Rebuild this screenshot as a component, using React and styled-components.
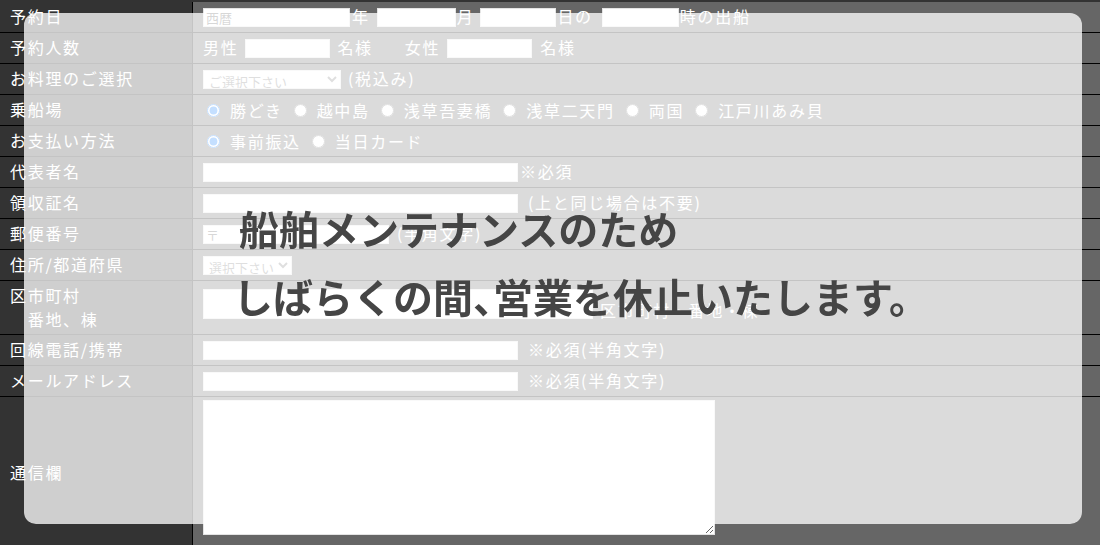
import React from "react";
import styled, { createGlobalStyle } from "styled-components";

const GlobalStyle = createGlobalStyle`
  html, body {
    margin: 0;
    padding: 0;
    background: #666;
    overflow: hidden;
  }
  body {
    font-family: "Noto Sans CJK JP", "Noto Sans", sans-serif;
    color: #fff;
  }
`;

// form table
const Form = styled.div`
  border-top: 2px solid #333;
`;

const Row = styled.div`
  display: grid;
  grid-template-columns: 193px 1fr;
  min-height: ${(p) => p.$h || 30}px;
  border-bottom: 1px solid #000;
`;

const Label = styled.div`
  background: #333;
  border-right: 1px solid #000;
  padding-left: 10px;
  display: flex;
  align-items: center;
  font-size: 16px;
  letter-spacing: 1.7px;
  line-height: 24px;
  padding-bottom: 2px;
`;

const Field = styled.div`
  display: flex;
  align-items: ${(p) => p.$align || "center"};
  padding: ${(p) => p.$pad || "0"} 0 0 10px;
  font-size: 16px;
  letter-spacing: 1.7px;
  line-height: 24px;
  white-space: nowrap;
`;

const Txt = styled.span`
  margin-left: ${(p) => p.$l || 0}px;
  margin-right: ${(p) => p.$r || 0}px;
  margin-top: ${(p) => p.$t || 0}px;
  margin-bottom: 2px;
`;

const TextBox = styled.input`
  box-sizing: border-box;
  width: ${(p) => p.$w}px;
  height: ${(p) => p.$h || 19}px;
  margin: 0;
  padding: 0 2px;
  border: 1px solid #e4e4e4;
  background: #fff;
  color: #555;
  font-family: inherit;
  font-size: 13px;
  letter-spacing: 0;
  outline: none;
`;

const Select = styled.select`
  box-sizing: border-box;
  width: ${(p) => p.$w}px;
  height: 19px;
  margin: 0;
  padding: 0 1px;
  border: 1px solid #e4e4e4;
  background: #fff;
  color: #777;
  font-family: inherit;
  font-size: 13px;
  letter-spacing: 0;
`;

const Option = styled.label`
  display: inline-flex;
  align-items: center;
  margin-right: 7px;
`;

const Radio = styled.input`
  width: 13px;
  height: 13px;
  margin: 0 10px 0 4px;
`;

const Memo = styled.textarea`
  box-sizing: border-box;
  width: 512px;
  height: 135px;
  margin: 0;
  border: 1px solid #e4e4e4;
  background: #fff;
`;

// notice overlay
const Notice = styled.div`
  position: fixed;
  top: 13px;
  left: 24px;
  right: 18px;
  bottom: 21px;
  box-sizing: border-box;
  padding: 181px 0 0 212px;
  background: rgba(255, 255, 255, 0.77);
  border-radius: 12px;
`;

const NoticeLine = styled.p`
  margin: 0;
  margin-left: ${(p) => p.$shift || 0}px;
  font-size: 40px;
  font-weight: 700;
  line-height: 68px;
  color: #454545;
  white-space: nowrap;
`;

const Punct = styled.span`
  font-feature-settings: "palt";
`;

const piers = ["勝どき", "越中島", "浅草吾妻橋", "浅草二天門", "両国", "江戸川あみ貝"];
const payments = ["事前振込", "当日カード"];

function App() {
  return (
    <>
      <GlobalStyle />
      <Form>
        <Row>
          <Label>予約日</Label>
          <Field>
            <TextBox $w={147} defaultValue="西暦" />
            <Txt $l={2} $r={7}>年</Txt>
            <TextBox $w={79} />
            <Txt $l={1} $r={6}>月</Txt>
            <TextBox $w={76} />
            <Txt $l={1} $r={9}>日の</Txt>
            <TextBox $w={77} />
            <Txt $l={1}>時の出船</Txt>
          </Field>
        </Row>
        <Row>
          <Label>予約人数</Label>
          <Field>
            <Txt $r={7}>男性</Txt>
            <TextBox $w={85} />
            <Txt $l={7} $r={32}>名様</Txt>
            <Txt $r={7}>女性</Txt>
            <TextBox $w={85} />
            <Txt $l={8}>名様</Txt>
          </Field>
        </Row>
        <Row>
          <Label>お料理のご選択</Label>
          <Field>
            <Select $w={138}>
              <option>ご選択下さい</option>
            </Select>
            <Txt $l={7}>(税込み)</Txt>
          </Field>
        </Row>
        <Row>
          <Label>乗船場</Label>
          <Field>
            {piers.map((p, i) => (
              <Option key={p}>
                <Radio type="radio" name="pier" defaultChecked={i === 0} />
                {p}
              </Option>
            ))}
          </Field>
        </Row>
        <Row>
          <Label>お支払い方法</Label>
          <Field>
            {payments.map((p, i) => (
              <Option key={p}>
                <Radio type="radio" name="pay" defaultChecked={i === 0} />
                {p}
              </Option>
            ))}
          </Field>
        </Row>
        <Row>
          <Label>代表者名</Label>
          <Field>
            <TextBox $w={315} />
            <Txt $l={2}>※必須</Txt>
          </Field>
        </Row>
        <Row>
          <Label>領収証名</Label>
          <Field>
            <TextBox $w={315} />
            <Txt $l={10}>(上と同じ場合は不要)</Txt>
          </Field>
        </Row>
        <Row>
          <Label>郵便番号</Label>
          <Field>
            <TextBox $w={186} defaultValue="〒" />
            <Txt $l={8}>(半角文字)</Txt>
          </Field>
        </Row>
        <Row>
          <Label>住所/都道府県</Label>
          <Field>
            <Select $w={89}>
              <option>選択下さい</option>
            </Select>
          </Field>
        </Row>
        <Row $h={53}>
          <Label>
            区市町村
            <br />
            {"　番地、棟"}
          </Label>
          <Field $align="flex-start" $pad="8px">
            <TextBox $w={390} $h={30} />
            <Txt $l={7} $t={9}>区市町村・番地・棟</Txt>
          </Field>
        </Row>
        <Row>
          <Label>回線電話/携帯</Label>
          <Field>
            <TextBox $w={315} />
            <Txt $l={10}>※必須(半角文字)</Txt>
          </Field>
        </Row>
        <Row>
          <Label>メールアドレス</Label>
          <Field>
            <TextBox $w={315} />
            <Txt $l={10}>※必須(半角文字)</Txt>
          </Field>
        </Row>
        <Row $h={152}>
          <Label>通信欄</Label>
          <Field $align="flex-start" $pad="3px">
            <Memo />
          </Field>
        </Row>
      </Form>
      <Notice>
        <NoticeLine $shift={3}>船舶メンテナンスのため</NoticeLine>
        <NoticeLine $shift={-3}>
          しばらくの間<Punct>、</Punct>営業を休止いたします。
        </NoticeLine>
      </Notice>
    </>
  );
}

export default App;
